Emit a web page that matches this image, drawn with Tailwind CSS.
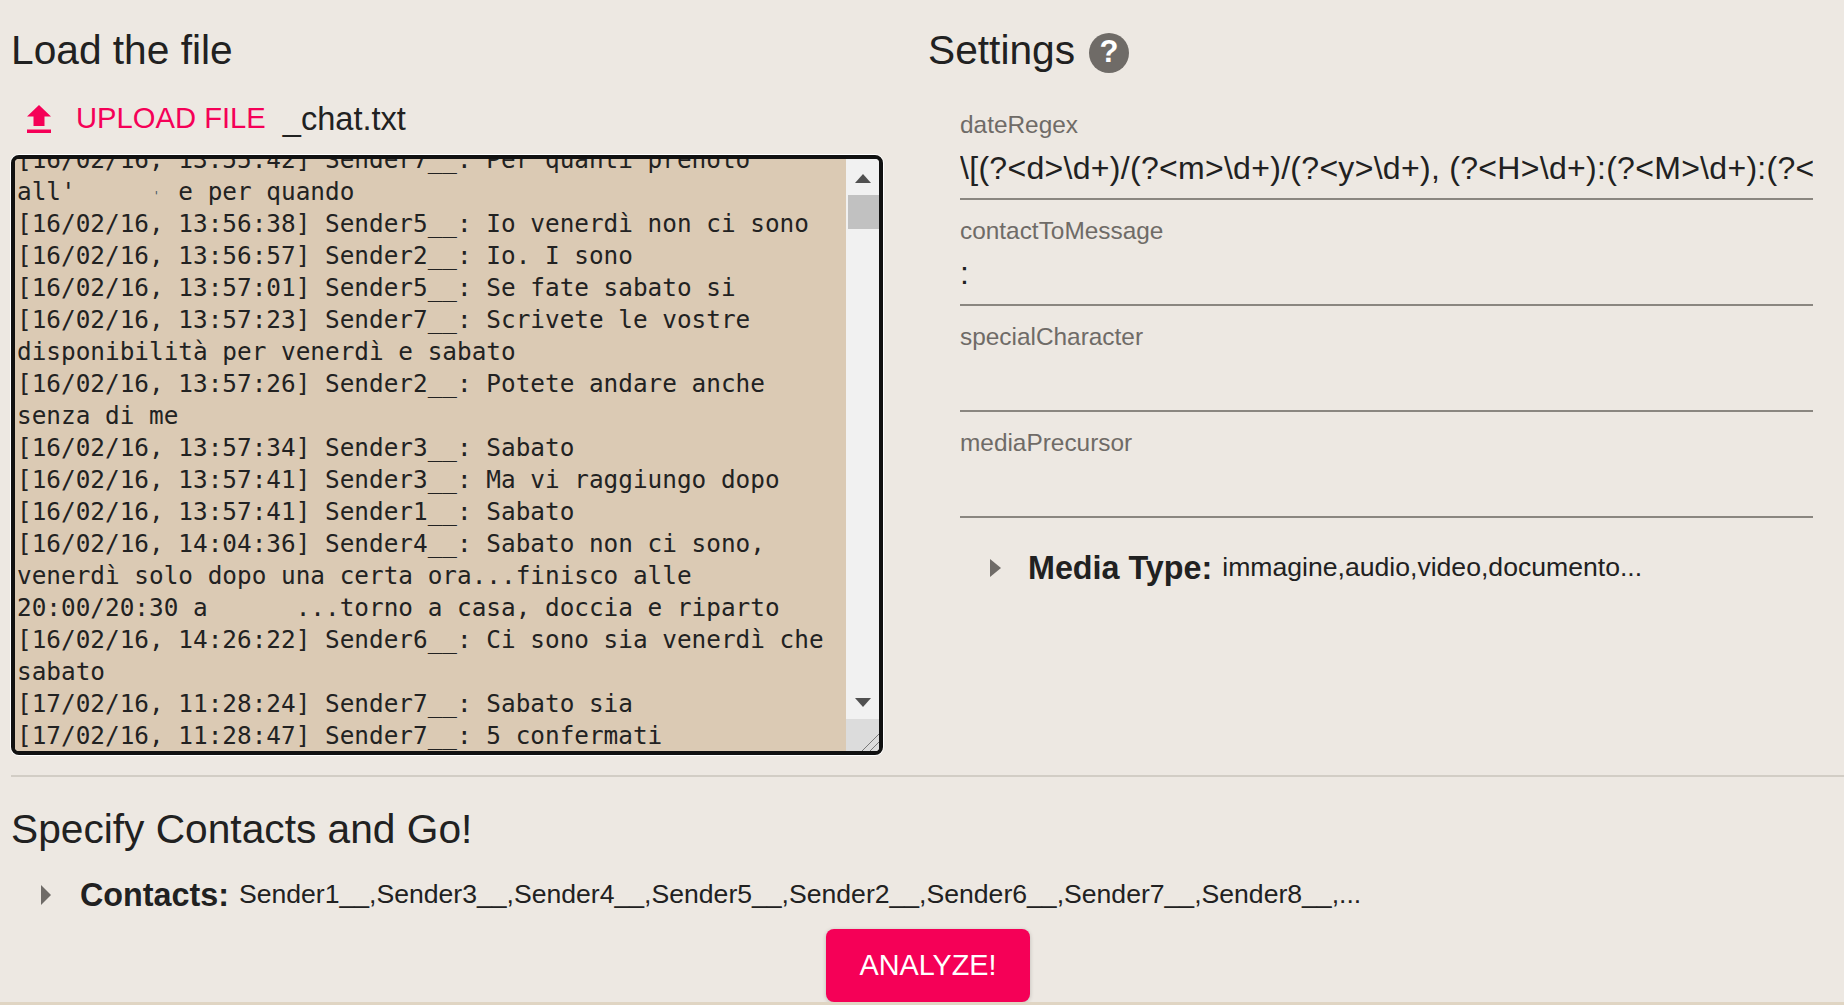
<!DOCTYPE html>
<html lang="en">
<head>
    <meta charset="UTF-8">
    <title>Chat Analyzer</title>
    <script src="https://cdn.jsdelivr.net/npm/@tailwindcss/browser@4"></script>
</head>
<body class="bg-[#ede8e2] text-[#212121] font-['Liberation_Sans',Arial,sans-serif]">
<div class="h-[1005px] overflow-hidden flex flex-col">

    <!-- Top: file + settings -->
    <div class="flex pl-3 h-[775px] shrink-0">
        <div class="w-[872px] shrink-0">
            <h1 class="ml-[-1px] text-[40.7px] leading-[46px] pt-[27px]">Load the file</h1>

            <div class="flex items-center h-[44px] mt-[24px] pl-[15px]">
                <svg class="w-[24px] h-[28px] shrink-0" viewBox="0 0 24 28" fill="#f50057">
                    <path d="M6.5 21V11.500H0L12 0L24 11.500H17.500V21Z"/>
                    <rect x="0" y="24.500" width="24" height="3.500"/>
                </svg>
                <span class="ml-[25px] text-[29.2px] text-[#f50057]">UPLOAD FILE</span>
                <span class="ml-[17px] text-[32.6px] text-[#212121]">_chat.txt</span>
            </div>

            <!-- Chat text box -->
            <div class="flex mt-[14px] ml-[-1px] w-[872px] h-[600px] border-4 border-[#111] rounded-[8px] shadow-[0_0_0_1px_#fff] overflow-hidden">
                <div class="flex-1 bg-[#dbcab4] overflow-hidden pl-[2px]">
                    <pre class="mt-[-15px] font-['DejaVu_Sans_Mono',monospace] text-[24.37px] leading-[32px] text-[#222]">[16/02/16, 13:55:42] Sender7__: Per quanti prenoto
all'     <span class="inline-block w-[14.67px] text-center text-[12px] leading-none text-[#456]">'</span> e per quando
[16/02/16, 13:56:38] Sender5__: Io venerdì non ci sono
[16/02/16, 13:56:57] Sender2__: Io. I sono
[16/02/16, 13:57:01] Sender5__: Se fate sabato si
[16/02/16, 13:57:23] Sender7__: Scrivete le vostre
disponibilità per venerdì e sabato
[16/02/16, 13:57:26] Sender2__: Potete andare anche
senza di me
[16/02/16, 13:57:34] Sender3__: Sabato
[16/02/16, 13:57:41] Sender3__: Ma vi raggiungo dopo
[16/02/16, 13:57:41] Sender1__: Sabato
[16/02/16, 14:04:36] Sender4__: Sabato non ci sono,
venerdì solo dopo una certa ora...finisco alle
20:00/20:30 a      ...torno a casa, doccia e riparto
[16/02/16, 14:26:22] Sender6__: Ci sono sia venerdì che
sabato
[17/02/16, 11:28:24] Sender7__: Sabato sia
[17/02/16, 11:28:47] Sender7__: 5 confermati</pre>
                </div>
                <!-- Scrollbar -->
                <div class="w-[33px] shrink-0 bg-[#f1f1f1] flex flex-col">
                    <div class="h-[36px] flex items-center justify-center pt-[2px]">
                        <svg class="w-[16px] h-[9px]" viewBox="0 0 16 9" fill="#505050"><path d="M8 0L16 9H0Z"/></svg>
                    </div>
                    <div class="h-[34px] ml-[2px] bg-[#c1c1c1]"></div>
                    <div class="flex-1"></div>
                    <div class="h-[34px] flex items-center justify-center">
                        <svg class="w-[16px] h-[9px]" viewBox="0 0 16 9" fill="#505050"><path d="M0 0H16L8 9Z"/></svg>
                    </div>
                    <div class="h-[32px] bg-[#dcdcdc] flex items-end justify-end">
                        <svg class="w-[18px] h-[18px]" viewBox="0 0 18 18" stroke="#777" stroke-width="1" fill="none"><path d="M1 18L18 1M9 18L18 9"/></svg>
                    </div>
                </div>
            </div>
        </div>

        <div class="ml-[45px] w-[884px] shrink-0">
            <div class="flex items-center pt-[27px] h-[73px]">
                <h2 class="ml-[-1px] text-[40.7px] leading-[46px]">Settings</h2>
                <div class="ml-[14px] mt-[5px] w-[40px] h-[40px] rounded-full bg-[#6f6b67] text-white text-[31px] font-bold flex items-center justify-center">?</div>
            </div>

            <div class="pl-[31px] mt-[38px]">
                <div class="h-[106px]">
                    <div class="text-[24.4px] leading-[28px] text-[#6f6b67]">dateRegex</div>
                    <div class="h-[61px] leading-[44px] pt-[7px] text-[32px] tracking-[0.3px] border-b-2 border-[#8a8680] overflow-hidden whitespace-nowrap">\[(?&lt;d&gt;\d+)/(?&lt;m&gt;\d+)/(?&lt;y&gt;\d+), (?&lt;H&gt;\d+):(?&lt;M&gt;\d+):(?&lt;S&gt;\d+)\]</div>
                </div>
                <div class="h-[106px]">
                    <div class="text-[24.4px] leading-[28px] text-[#6f6b67]">contactToMessage</div>
                    <div class="h-[61px] leading-[44px] pt-[6px] text-[32px] border-b-2 border-[#8a8680]">:</div>
                </div>
                <div class="h-[106px]">
                    <div class="text-[24.4px] leading-[28px] text-[#6f6b67]">specialCharacter</div>
                    <div class="h-[61px] border-b-2 border-[#8a8680]"></div>
                </div>
                <div class="h-[106px]">
                    <div class="text-[24.4px] leading-[28px] text-[#6f6b67]">mediaPrecursor</div>
                    <div class="h-[61px] border-b-2 border-[#8a8680]"></div>
                </div>
                <div class="flex items-center mt-[3px] pl-[30px] h-[60px] whitespace-nowrap">
                    <svg class="w-[11px] h-[18px] shrink-0" viewBox="0 0 11 18" fill="#6f6b67"><path d="M0 0L11 9L0 18Z"/></svg>
                    <span class="ml-[27px] text-[32.3px] font-bold">Media Type:</span>
                    <span class="ml-[10px] text-[26.6px]">immagine,audio,video,documento...</span>
                </div>
            </div>
        </div>
    </div>

    <!-- Bottom: contacts + go -->
    <div class="ml-[11px] border-t-2 border-[#d2cdc5] flex-1 flex flex-col">
        <h2 class="text-[40.7px] leading-[46px] mt-[29px]">Specify Contacts and Go!</h2>
        <div class="flex items-center h-[40px] mt-[23px] pl-[30px] whitespace-nowrap">
            <svg class="w-[10px] h-[20px] shrink-0" viewBox="0 0 10 20" fill="#6f6b67"><path d="M0 0L10 10L0 20Z"/></svg>
            <span class="ml-[29px] text-[32.3px] font-bold">Contacts:</span>
            <span class="ml-[10px] text-[26.6px]">Sender1__,Sender3__,Sender4__,Sender5__,Sender2__,Sender6__,Sender7__,Sender8__,...</span>
        </div>
        <div class="mt-[14px] ml-[815px] w-[204px] h-[73px] rounded-[8px] bg-[#f50057] text-white text-[28.8px] flex items-center justify-center shadow-[0_1px_4px_rgba(0,0,0,0.2)]">ANALYZE!</div>
    </div>
    <div class="h-[3px] bg-[#e0d5c3] shrink-0"></div>
</div>
</body>
</html>
